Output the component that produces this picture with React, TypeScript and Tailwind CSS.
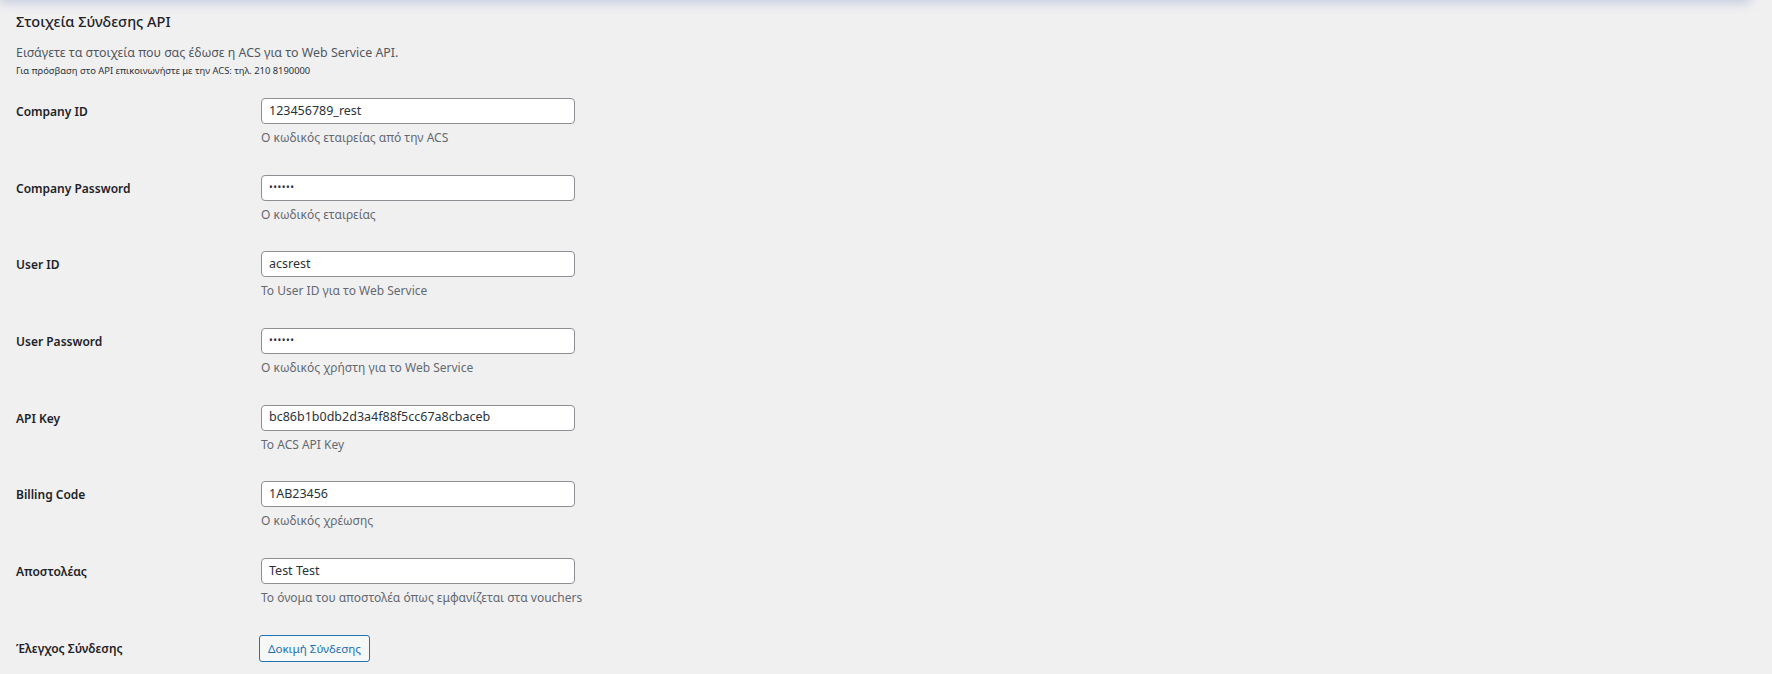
const fields = [
  { label: 'Company ID', value: '123456789_rest', hint: 'Ο κωδικός εταιρείας από την ACS' },
  { label: 'Company Password', value: '••••••', hint: 'Ο κωδικός εταιρείας', secret: true },
  { label: 'User ID', value: 'acsrest', hint: 'Το User ID για το Web Service' },
  { label: 'User Password', value: '••••••', hint: 'Ο κωδικός χρήστη για το Web Service', secret: true },
  { label: 'API Key', value: 'bc86b1b0db2d3a4f88f5cc67a8cbaceb', hint: 'Το ACS API Key' },
  { label: 'Billing Code', value: '1AB23456', hint: 'Ο κωδικός χρέωσης' },
  { label: 'Αποστολέας', value: 'Test Test', hint: 'Το όνομα του αποστολέα όπως εμφανίζεται στα vouchers' },
];

export default function App() {
  return (
    <div className="relative h-screen overflow-hidden bg-[#f0f0f1] font-['Noto_Sans','DejaVu_Sans',sans-serif] text-[#1d2327]">
      {/* shadow of the bar above */}
      <div className="absolute -top-[20px] left-0 right-[22px] h-[20px] shadow-[0_2px_12px_rgba(60,90,160,0.28)]" />

      <div className="pl-4 pt-[11px]">
        <h2 className="text-[14.5px] font-medium leading-[20px]">Στοιχεία Σύνδεσης API</h2>
        <p className="mt-[13px] text-[12.4px] leading-[18px] text-[#50575e]">
          Εισάγετε τα στοιχεία που σας έδωσε η ACS για το Web Service API.
        </p>
        <p className="mt-[2px] text-[9.4px] leading-[14px] text-[#2c3338]">
          Για πρόσβαση στο API επικοινωνήστε με την ACS: τηλ. 210 8190000
        </p>

        <div className="mt-[20px]">
          {fields.map((f) => (
            <FieldRow key={f.label} {...f} />
          ))}
          <div className="flex h-[38px] items-start">
            <div className="w-[245px] pt-[1px] text-[12px] font-semibold leading-[26px]">Έλεγχος Σύνδεσης</div>
            <button
              type="button"
              className="ml-[-2px] h-[27px] rounded-[3px] border border-[#2271b1] bg-[#f6f7f7] px-[8px] text-[11.6px] leading-[25px] text-[#2271b1]"
            >
              Δοκιμή Σύνδεσης
            </button>
          </div>
        </div>
      </div>
    </div>
  );
}

function FieldRow({ label, value, hint, secret }: { label: string; value: string; hint: string; secret?: boolean }) {
  return (
    <div className="flex h-[76.67px] items-start">
      <div className="w-[245px] pt-[1px] text-[12px] font-semibold leading-[26px]">{label}</div>
      <div>
        <div
          className={
            secret
              ? 'box-border flex h-[26px] w-[314px] items-center rounded-[4px] border border-[#8c8f94] bg-white px-[7px] text-[10px] tracking-[0.5px] text-[#2c3338]'
              : 'box-border flex h-[26px] w-[314px] items-center rounded-[4px] border border-[#8c8f94] bg-white px-[7px] text-[12.5px] text-[#2c3338]'
          }
        >
          {value}
        </div>
        <p className="mt-[5px] text-[12px] leading-[18px] text-[#646970]">{hint}</p>
      </div>
    </div>
  );
}
